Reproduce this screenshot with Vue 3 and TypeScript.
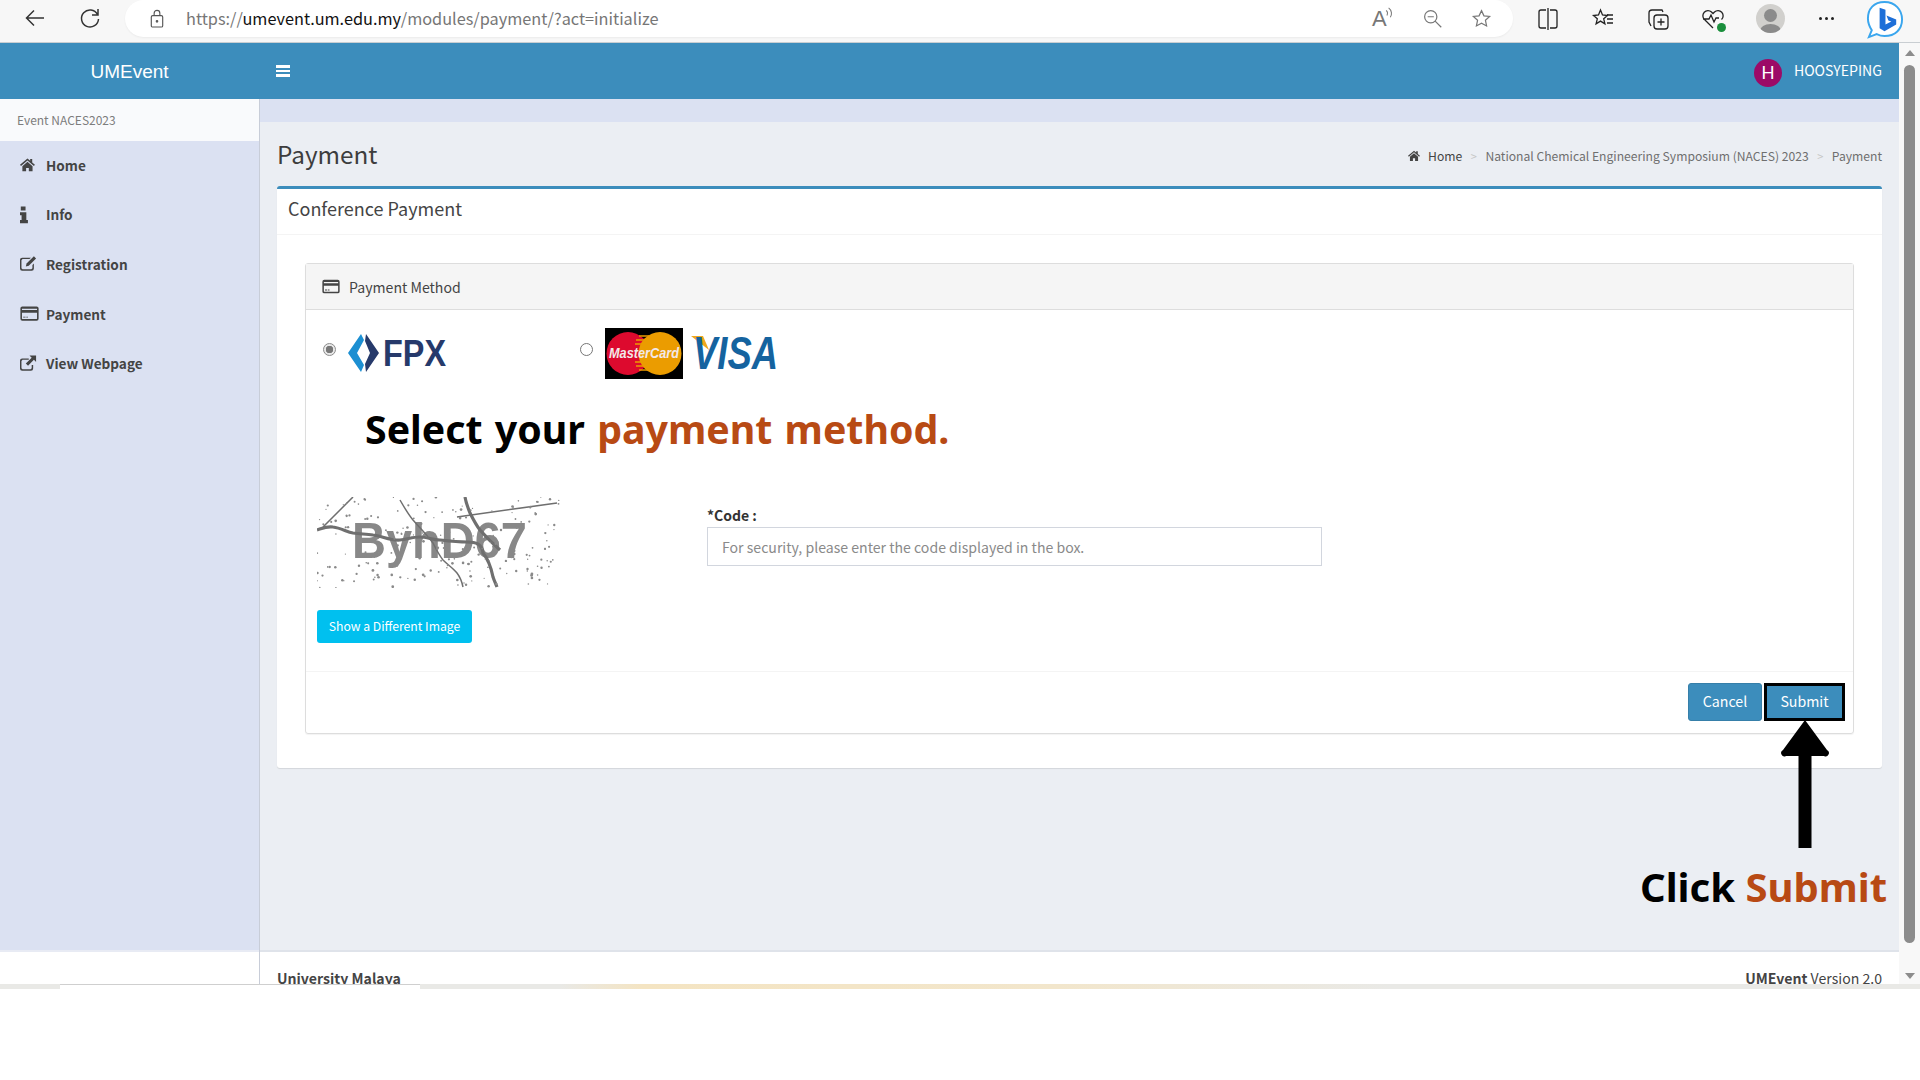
<template>
  <div class="screen">
    <div class="browser-bar">
      <svg class="tb-btn back" viewBox="0 0 24 24"><path d="M21 12H4M11 4.500 3.500 12l7.500 7.500" /></svg>
      <svg class="tb-btn reload" viewBox="0 0 24 24"><path d="M19.500 8.500A8.500 8.500 0 1 0 20.500 13M20 3v6h-6" /></svg>
      <div class="address">
        <svg class="lock" viewBox="0 0 16 20"><rect x="2" y="7" width="12" height="12" rx="1.500" /><path d="M5 7V4.500a3 3 0 0 1 6 0V7" /><circle cx="8" cy="13" r=".8" /></svg>
        <span class="url">https://<b>umevent.um.edu.my</b>/modules/payment/?act=initialize</span>
        <div class="address-icons">
          <span class="read-aloud">A<svg viewBox="0 0 10 14"><path d="M1 4c2 1 2 4 1 6M4 1c4 3 4 8 2 11" /></svg></span>
          <svg viewBox="0 0 24 24"><circle cx="10" cy="10" r="7" /><path d="M6.500 10h7M15 15l7 7" /></svg>
          <svg viewBox="0 0 24 24"><path d="m12 3 2.800 6 6.500.7-4.800 4.400 1.300 6.400L12 17.300 6.200 20.500l1.300-6.400L2.700 9.700 9.200 9z" /></svg>
        </div>
      </div>
      <div class="toolbar">
        <svg viewBox="0 0 24 24"><path d="M10 3H5a2 2 0 0 0-2 2v14a2 2 0 0 0 2 2h5M14 3h5a2 2 0 0 1 2 2v14a2 2 0 0 1-2 2h-5M12 1v22" /></svg>
        <svg viewBox="0 0 24 24"><path d="m9.500 3 2 5 5 .5-3.800 3.300 1.200 5-4.400-2.700-4.400 2.700 1.200-5L2.500 8.500l5-.5zM16 8h6M16 12h6M16 16h6" /></svg>
        <svg viewBox="0 0 24 24"><rect x="8" y="8" width="14" height="14" rx="3" /><path d="M15 11.500v7M11.500 15h7M17 5l-1-2H6a3 3 0 0 0-3 3v9l2 4" /></svg>
        <span class="health">
          <svg viewBox="0 0 24 24"><path d="M12 21 3.500 12.500a5 5 0 0 1 7-7.500L12 6.500 13.500 5a5 5 0 0 1 7 7.500M2 12h6l2-4 3 7 2-4h3" /></svg>
          <i class="health-ok"></i>
        </span>
        <span class="profile"><i class="head"></i><i class="shoulders"></i></span>
        <span class="dots"><i></i><i></i><i></i></span>
      </div>
      <svg class="bing" viewBox="0 0 40 40">
        <path d="M20 2C9 2 3 9 3 19c0 5 2 9 4 12l-3 7 8-3c2 1 5 2 8 2 11 0 18-7 18-17S31 2 20 2z" fill="#fff" stroke="#3aa6ee" stroke-width="2" />
        <path d="M15 8l6 2v15l6-3-3-1-2-5 10 4v5l-12 7-5-3z" fill="#1d6fd8" />
      </svg>
    </div>

    <div class="viewport">
      <div class="window">
        <header class="topnav">
          <div class="logo">UMEvent</div>
          <div class="hamburger"><i></i><i></i><i></i></div>
          <div class="user">
            <span class="avatar">H</span>
            <span class="username">HOOSYEPING</span>
          </div>
        </header>

        <div class="layout">
          <aside class="sidebar">
            <div class="event-name">Event NACES2023</div>
            <nav class="menu">
              <a v-for="item in menu" :key="item.label" class="menu-item">
                <svg class="menu-icon" :viewBox="item.box" preserveAspectRatio="xMinYMid meet" v-html="item.icon"></svg>
                <span>{{ item.label }}</span>
              </a>
            </nav>
            <div class="sidebar-foot"></div>
          </aside>

          <main class="main">
            <div class="strip"></div>
            <div class="content">
              <div class="title-row">
                <h1>Payment</h1>
                <div class="crumbs">
                  <svg class="crumb-home" viewBox="0 0 24 24" v-html="homeIcon"></svg>
                  <span class="crumb-first">Home</span>
                  <em>&gt;</em>
                  <span>National Chemical Engineering Symposium (NACES) 2023</span>
                  <em>&gt;</em>
                  <span>Payment</span>
                </div>
              </div>

              <section class="card">
                <div class="card-title">Conference Payment</div>
                <div class="panel">
                  <div class="panel-heading">
                    <svg class="panel-icon" viewBox="0 2 24 20" v-html="cardIcon"></svg>
                    Payment Method
                  </div>
                  <div class="methods">
                    <label class="method fpx-method">
                      <span class="radio checked"></span>
                      <svg class="fpx" viewBox="0 0 100 38">
                        <path d="M13 0 0 19l13 19 3-7-7-12 7-13z" fill="#1c8fd2" />
                        <path d="M18 0l13 19-13 19-1-8 5-11-5-12z" fill="#263a6b" />
                        <text x="35" y="32" class="fpx-text" textLength="63" lengthAdjust="spacingAndGlyphs">FPX</text>
                      </svg>
                    </label>
                    <label class="method">
                      <span class="radio"></span>
                      <svg class="mc" viewBox="0 0 78 51">
                        <rect width="78" height="51" fill="#000" />
                        <circle cx="23" cy="25.500" r="21.500" fill="#dd0a2e" />
                        <circle cx="55" cy="25.500" r="21.500" fill="#eb9c00" />
                        <path d="M34 8h10M31 12h16M30 16h18M30 34h18M31 38h16M34 42h10" stroke="#eb9c00" stroke-width="1.500" />
                        <text x="4" y="30" class="mc-text" textLength="70" lengthAdjust="spacingAndGlyphs">MasterCard</text>
                      </svg>
                      <svg class="visa" viewBox="0 0 90 36">
                        <path d="M0 1h12l6 14z" fill="#f0a81e" />
                        <text x="2" y="34" class="visa-text" textLength="85" lengthAdjust="spacingAndGlyphs">VISA</text>
                      </svg>
                    </label>
                  </div>

                  <div class="select-note">Select your <span class="accent">payment method.</span></div>

                  <div class="security">
                    <div class="captcha-col">
                      <svg class="captcha" viewBox="0 0 243 91">
                        <text x="35" y="61" class="captcha-text" textLength="175" lengthAdjust="spacingAndGlyphs">ByhD67</text>
                        <path d="M0 33c6-2 10-4 16-3 8 1 14 5 20 6 7 1 13 1 20 2 9 1 18 6 27 5 8-1 13-3 20-3 7 0 13 3 20 3 9 1 18 2 27 2s15 2 16 11c5 6 8 14 10 24 1 3 2 5 4 10" class="line thick" />
                        <path d="M148 0c1 6 3 11 5 16 3 6 6 12 10 17 6 7 12 13 20 20" class="line thick" />
                        <path d="M6 30 36 0M140 20l100-14M83 3c4 7 8 14 13 20 7 8 14 15 20 23 3 6 6 12 10 17 5 5 10 8 14 13 3 4 5 9 6 14" class="line" />
                        <circle v-for="d in dots" :key="d.id" :cx="d.x" :cy="d.y" :r="d.r" fill="#8a8a8a" />
                      </svg>
                      <button class="btn-info">Show a Different Image</button>
                    </div>
                    <div class="code-col">
                      <label>*Code :</label>
                      <input placeholder="For security, please enter the code displayed in the box." />
                    </div>
                  </div>

                  <div class="panel-footer">
                    <button class="btn">Cancel</button>
                    <button class="btn submit">Submit</button>
                  </div>
                </div>
              </section>
            </div>
            <footer class="footer">
              <b>University Malaya</b>
              <span><b>UMEvent</b> Version 2.0</span>
            </footer>
          </main>
        </div>
      </div>

      <div class="scrollbar">
        <i class="arrow-up"></i>
        <div class="thumb"></div>
        <i class="arrow-down"></i>
      </div>
    </div>

    <div class="taskstrip">
      <div class="task-tab"></div>
      <div class="task-warm"></div>
    </div>

    <svg class="pointer" viewBox="0 0 48 128">
      <path d="M24 0 46 30a3 3 0 0 1-3 6H30.500v92h-13V36H5a3 3 0 0 1-3-6z" fill="#000" />
    </svg>
    <div class="click-note">Click <span class="accent">Submit</span></div>
  </div>
</template>

<script setup lang="ts">
const homeIcon =
  '<path d="M12 3 1 12.500l1.500 1.700L12 6l9.500 8.200 1.500-1.700-4-3.500V4h-3v2.400z"/><path d="M12 8 4.500 14.500V22H10v-5h4v5h5.500v-7.500z"/>'
const cardIcon =
  '<path fill-rule="evenodd" d="M3 3h18a2.500 2.500 0 0 1 2.500 2.500v13A2.500 2.500 0 0 1 21 21H3a2.500 2.500 0 0 1-2.500-2.500v-13A2.500 2.500 0 0 1 3 3zm-.5 8v7.500l.5.500h18l.5-.5V11zm0-5v1.500h19V6z"/><path d="M4 16h3v1.200H4zM8 16h2v1.200H8z"/>'

const menu = [
  { label: 'Home', box: '1 -2 28 28', icon: homeIcon },
  {
    label: 'Info',
    box: '7 0 24 24',
    icon: '<path d="M8 2h6v5H8zM7 9h8v10h2v4H7v-4h2v-6H7z"/>',
  },
  {
    label: 'Registration',
    box: '1 -1 26 26',
    icon: '<path d="M4 4h12l-2 2H4.500L3 7.500v11L4.500 20h12l1.500-1.500V14l2-2v7a3 3 0 0 1-3 3H4a3 3 0 0 1-3-3V7a3 3 0 0 1 3-3z"/><path d="M20 2l3 3-10 10-4 1 1-4z"/>',
  },
  { label: 'Payment', box: '0 0 24 24', icon: cardIcon },
  {
    label: 'View Webpage',
    box: '1 -1 26 26',
    icon: '<path d="M4 5h9v2H4.500L3 8.500v10L4.500 20h11l1.500-1.500V14h2v5a3 3 0 0 1-3 3H4a3 3 0 0 1-3-3V8a3 3 0 0 1 3-3z"/><path d="M14 1h9v9l-3-3-8 8-3-3 8-8z"/>',
  },
]

// captcha speckle, seeded so that every render gives the same picture
let seed = 7
const next = () => {
  seed = (seed * 16807) % 2147483647
  return seed / 2147483647
}
const dots = Array.from({ length: 200 }, (_, id) => ({
  id,
  x: next() * 243,
  y: next() * 91,
  r: 0.6 + next() * 0.8,
}))
</script>

<style>
html,
body {
  margin: 0;
  background: #fff;
}
</style>

<style scoped>
.screen {
  position: relative;
  width: 1920px;
  height: 1080px;
  overflow: hidden;
  background: #fff;
  display: flex;
  flex-direction: column;
  font-family: "Noto Sans CJK SC", "Noto Sans", sans-serif;
  color: #444;
}

/* browser chrome */
.browser-bar {
  height: 43px;
  box-sizing: border-box;
  border-bottom: 1px solid #c9ced2;
  background: #f7f7f7;
  display: flex;
  align-items: flex-start;
  flex-shrink: 0;
}
.browser-bar svg {
  fill: none;
  stroke: #333;
  stroke-width: 1.500;
}
.tb-btn {
  width: 24px;
  height: 24px;
  margin-top: 6px;
}
.back {
  margin-left: 23px;
}
.reload {
  margin-left: 31px;
}
.address {
  margin-left: 23px;
  width: 1388px;
  height: 37px;
  border-radius: 19px;
  background: #fff;
  display: flex;
  align-items: center;
  box-shadow: 0 1px 2px rgba(0, 0, 0, 0.05);
}
.lock {
  width: 16px;
  height: 19px;
  margin-left: 24px;
  stroke: #555 !important;
  stroke-width: 1.200 !important;
}
.url {
  margin-left: 21px;
  font-size: 16.300px;
  color: #767676;
  margin-top: -2px;
}
.url b {
  font-weight: 400;
  color: #111;
}
.address-icons {
  margin-left: auto;
  display: flex;
  align-items: center;
  gap: 28px;
  margin-right: 21px;
}
.address-icons > svg {
  width: 21px;
  height: 21px;
  stroke: #777;
  stroke-width: 1.400;
}
.read-aloud {
  position: relative;
  width: 22px;
  font-size: 22px;
  line-height: 22px;
  color: #777;
  font-family: "Liberation Sans", sans-serif;
}
.read-aloud svg {
  position: absolute;
  left: 13px;
  top: -1px;
  width: 9px;
  height: 12px;
  stroke: #777;
  stroke-width: 1.200;
}
.toolbar {
  display: flex;
  align-items: center;
  height: 37px;
  margin-left: 23px;
  gap: 31px;
}
.toolbar > svg {
  width: 24px;
  height: 24px;
  stroke: #222;
  stroke-width: 1.300;
}
.health {
  position: relative;
  width: 24px;
  height: 24px;
}
.health svg {
  width: 24px;
  height: 24px;
  stroke: #222;
  stroke-width: 1.300;
}
.health-ok {
  position: absolute;
  right: -1px;
  bottom: -1px;
  width: 9px;
  height: 9px;
  border-radius: 50%;
  background: #1a8f3c;
}
.profile {
  position: relative;
  width: 29px;
  height: 29px;
  border-radius: 50%;
  background: #d1d0cd;
  overflow: hidden;
}
.head {
  position: absolute;
  left: 8px;
  top: 5px;
  width: 13px;
  height: 13px;
  border-radius: 50%;
  background: #8b8b8b;
}
.shoulders {
  position: absolute;
  left: 4px;
  top: 20px;
  width: 21px;
  height: 14px;
  border-radius: 50%;
  background: #8b8b8b;
}
.dots {
  display: flex;
  gap: 3px;
  width: 15px;
  margin-left: 3px;
}
.dots i {
  width: 3px;
  height: 3px;
  border-radius: 50%;
  background: #222;
}
.bing {
  width: 39px;
  height: 39px;
  margin-left: 31px;
  stroke: none !important;
}

/* page */
.viewport {
  height: 941px;
  display: flex;
  flex-shrink: 0;
  overflow: hidden;
}
.window {
  flex: 1;
  min-width: 0;
  display: flex;
  flex-direction: column;
}
.topnav {
  height: 56px;
  flex-shrink: 0;
  background: #3c8dbc;
  display: flex;
  align-items: center;
  color: #fff;
}
.logo {
  width: 259px;
  text-align: center;
  font-family: "Liberation Sans", sans-serif;
  font-size: 19px;
  padding-top: 1px;
}
.hamburger {
  margin-left: 17px;
  width: 14px;
  display: flex;
  flex-direction: column;
  gap: 2px;
}
.hamburger i {
  height: 2.500px;
  background: #fff;
}
.user {
  margin-left: auto;
  margin-right: 17px;
  display: flex;
  align-items: center;
  gap: 12px;
}
.avatar {
  width: 28px;
  height: 28px;
  margin-top: 4px;
  border-radius: 50%;
  background: #9c0a67;
  text-align: center;
  line-height: 28px;
  font-family: "Liberation Sans", sans-serif;
  font-size: 18px;
}
.username {
  font-size: 14.100px;
  margin-top: -2px;
}
.layout {
  flex: 1;
  min-height: 0;
  display: flex;
}
.sidebar {
  width: 259px;
  flex-shrink: 0;
  box-sizing: content-box;
  border-right: 1px solid #c8cdd8;
  display: flex;
  flex-direction: column;
}
.event-name {
  height: 42px;
  flex-shrink: 0;
  background: #f9fafc;
  padding-left: 17px;
  font-size: 12px;
  line-height: 42px;
  color: #7d7d7d;
}
.menu {
  flex: 1;
  background: #dbe1f2;
}
.menu-item {
  height: 49.600px;
  padding-left: 20px;
  display: flex;
  align-items: center;
  font-size: 13.600px;
  font-weight: 600;
  color: #444;
}
.menu-item span {
  margin-top: -2px;
}
.menu-icon {
  width: 19px;
  height: 19px;
  margin: -2px 7px 0 0;
  fill: #444;
  flex-shrink: 0;
}
.sidebar-foot {
  height: 34px;
  flex-shrink: 0;
  border-top: 2px solid #e8ebf4;
  box-sizing: border-box;
  background: #fff;
}
.main {
  flex: 1;
  min-width: 0;
  display: flex;
  flex-direction: column;
}
.strip {
  height: 23px;
  flex-shrink: 0;
  background: #dbe1f2;
}
.content {
  flex: 1;
  min-height: 0;
  background: #ebeef3;
  padding: 0 17px;
}
.title-row {
  height: 64px;
  display: flex;
  align-items: center;
  justify-content: space-between;
}
h1 {
  margin: 0 0 2px;
  font-size: 24.300px;
  font-weight: 400;
  color: #3d3d3d;
}
.crumbs {
  display: flex;
  align-items: center;
  font-size: 12.150px;
  color: #6f6f6f;
  padding-top: 3px;
}
.crumb-home {
  width: 14px;
  height: 13px;
  fill: #444;
  margin-right: 7px;
}
.crumb-first {
  color: #444;
}
.crumbs em {
  margin: 0 8.500px;
  font-style: normal;
  color: #c6c6c6;
  font-size: 11px;
}
.card {
  height: 582px;
  box-sizing: border-box;
  background: #fff;
  border-top: 3px solid #3c8dbc;
  border-radius: 3px;
  box-shadow: 0 1px 1px rgba(0, 0, 0, 0.1);
  display: flex;
  flex-direction: column;
}
.card-title {
  height: 46px;
  flex-shrink: 0;
  box-sizing: border-box;
  border-bottom: 1px solid #f4f4f4;
  padding-left: 11px;
  line-height: 39px;
  font-size: 18px;
  color: #444;
}
.panel {
  margin: 28px 28px 0 28px;
  height: 471px;
  box-sizing: border-box;
  border: 1px solid #ddd;
  border-radius: 3px;
  box-shadow: 0 1px 1px rgba(0, 0, 0, 0.05);
  display: flex;
  flex-direction: column;
}
.panel-heading {
  height: 46px;
  flex-shrink: 0;
  box-sizing: border-box;
  background: #f5f5f5;
  border-bottom: 1px solid #ddd;
  padding-left: 16px;
  display: flex;
  align-items: center;
  font-size: 14.100px;
  color: #444;
}
.panel-icon {
  width: 18px;
  height: 15px;
  margin-right: 9px;
  fill: #444;
}
.methods {
  margin-top: 17px;
  height: 52px;
  display: flex;
  align-items: center;
  flex-shrink: 0;
}
.method {
  display: flex;
  align-items: center;
}
.fpx-method {
  width: 274px;
  padding-left: 17px;
  box-sizing: border-box;
}
.radio {
  width: 13px;
  height: 13px;
  box-sizing: border-box;
  border: 1px solid #767676;
  border-radius: 50%;
  background: #fff;
  margin-top: -7px;
}
.radio.checked {
  border-color: #8c8c8c;
  background: radial-gradient(circle, #777 0 3.500px, #e8e8e8 4px);
}
.fpx {
  width: 100px;
  height: 38px;
  margin-left: 12px;
}
.fpx-text {
  font-family: "Liberation Sans", sans-serif;
  font-weight: 700;
  font-size: 37px;
  fill: #263a6b;
}
.mc {
  width: 78px;
  height: 51px;
  margin-left: 12px;
}
.mc-text {
  font-family: "Liberation Sans", sans-serif;
  font-size: 14px;
  font-weight: 700;
  font-style: italic;
  fill: #f2e8e8;
}
.visa {
  width: 90px;
  height: 36px;
  margin-left: 8px;
}
.visa-text {
  font-family: "Liberation Sans", sans-serif;
  font-size: 46px;
  font-weight: 700;
  font-style: italic;
  fill: #15639f;
}
.select-note {
  margin: 23px 0 0 59px;
  height: 54px;
  font-size: 39.300px;
  word-spacing: 2px;
  line-height: 54px;
  font-weight: 700;
  color: #000;
  flex-shrink: 0;
  font-family: "Noto Sans", sans-serif;
  white-space: nowrap;
}
.accent {
  color: #b84a14;
}
.security {
  margin-top: 41px;
  display: flex;
  flex: 1;
  min-height: 0;
}
.captcha-col {
  width: 390px;
  padding-left: 11px;
  flex-shrink: 0;
}
.captcha {
  display: block;
  width: 243px;
  height: 91px;
}
.captcha-text {
  font-family: "Liberation Sans", sans-serif;
  font-weight: 700;
  font-size: 50px;
  fill: #888;
}
.line {
  fill: none;
  stroke: #6f6f6f;
  stroke-width: 1.500;
}
.thick {
  stroke-width: 3.200;
}
.btn-info {
  display: block;
  margin-top: 22px;
  width: 155px;
  height: 33px;
  padding: 0 0 2px;
  border: 0;
  border-radius: 3px;
  background: #00c0ef;
  color: #fff;
  font-family: inherit;
  font-size: 12.200px;
}
.code-col {
  padding-top: 9px;
  width: 615px;
}
.code-col label {
  display: block;
  height: 21px;
  font-size: 14px;
  line-height: 19px;
  font-weight: 700;
  color: #333;
}
.code-col input {
  display: block;
  width: 100%;
  height: 39px;
  box-sizing: border-box;
  border: 1px solid #d2d6de;
  padding: 0 14px;
  font-family: inherit;
  font-size: 14.100px;
  outline: none;
}
.code-col input::placeholder {
  color: #8a8a8a;
  opacity: 1;
}
.panel-footer {
  height: 62px;
  flex-shrink: 0;
  box-sizing: border-box;
  border-top: 1px solid #f4f4f4;
  padding: 11px 8px 0 0;
  display: flex;
  justify-content: flex-end;
  align-items: flex-start;
  gap: 2px;
}
.btn {
  width: 74px;
  height: 38px;
  padding: 0 0 2px;
  border: 1px solid #367fa9;
  border-radius: 3px;
  background: #3c8dbc;
  color: #fff;
  font-family: inherit;
  font-size: 14.200px;
}
.submit {
  width: 81px;
  border: 3px solid #000;
  border-radius: 0;
}
.footer {
  height: 34px;
  flex-shrink: 0;
  box-sizing: border-box;
  border-top: 2px solid #dfe3ea;
  background: #fff;
  padding: 16px 17px 0;
  display: flex;
  justify-content: space-between;
  font-size: 14.100px;
  line-height: 21px;
  color: #444;
  overflow: hidden;
}
.scrollbar {
  width: 21px;
  flex-shrink: 0;
  background: #f8f8f8;
  display: flex;
  flex-direction: column;
  align-items: center;
}
.arrow-up {
  margin-top: 7px;
  border: 5px solid transparent;
  border-top: 0;
  border-bottom: 6px solid #8c8c8c;
}
.thumb {
  margin-top: 9px;
  width: 11px;
  height: 878px;
  border-radius: 6px;
  background: #8c8c8c;
}
.arrow-down {
  margin-top: 30px;
  border: 5px solid transparent;
  border-bottom: 0;
  border-top: 6px solid #8c8c8c;
}
.taskstrip {
  position: relative;
  height: 5px;
  flex-shrink: 0;
  background: #e9e9e6;
}
.task-tab {
  position: absolute;
  left: 60px;
  top: 0;
  width: 360px;
  height: 5px;
  background: #fff;
  border-top: 1px solid #cfcfcf;
  box-sizing: border-box;
}
.task-warm {
  position: absolute;
  left: 560px;
  top: 0;
  width: 830px;
  height: 5px;
  background: linear-gradient(90deg, #e9e9e6, #f4e4c2 10%, #f2e6cc 60%, #e9e9e6);
}

/* tutorial annotations laid over the screenshot */
.pointer {
  position: absolute;
  left: 1781px;
  top: 720px;
  width: 48px;
  height: 128px;
}
.click-note {
  position: absolute;
  left: 1640px;
  top: 860px;
  font-family: "Noto Sans", sans-serif;
  font-size: 40px;
  line-height: 54px;
  font-weight: 700;
  color: #000;
  white-space: nowrap;
}
</style>
